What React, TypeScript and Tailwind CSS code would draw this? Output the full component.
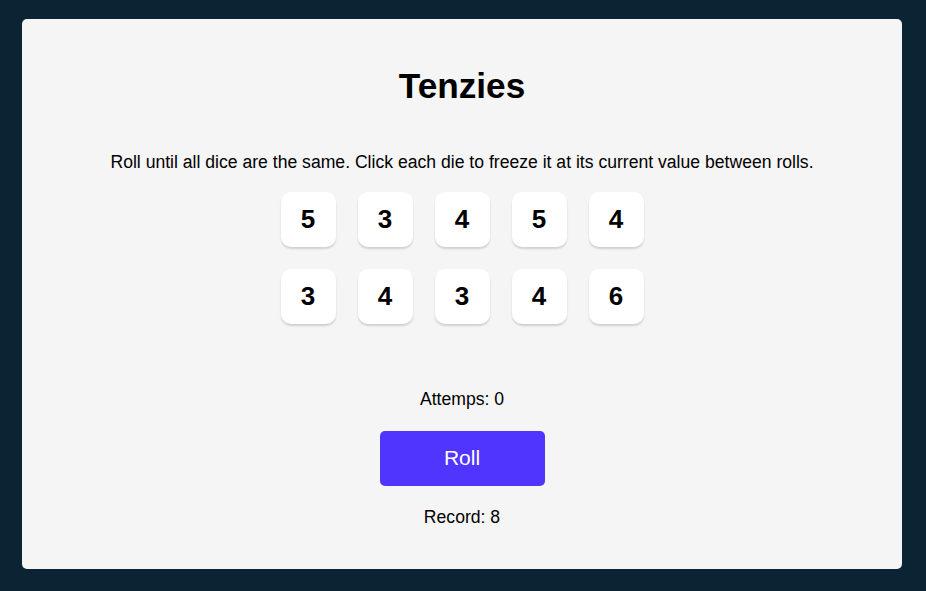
import React, { useState } from 'react';

const Die = ({ value, held, onClick }: { value: number; held: boolean; onClick: () => void }) => (
    <button
        onClick={onClick}
        className={`w-[55px] h-[55px] rounded-[10px] shadow-[0_2px_2px_rgba(0,0,0,0.15)] flex items-center justify-center text-[26px] font-bold text-black ${
            held ? 'bg-[#59E391]' : 'bg-white'
        }`}
    >
        {value}
    </button>
);

const App = () => {
    const [dice, setDice] = useState(
        [5, 3, 4, 5, 4, 3, 4, 3, 4, 6].map((value, i) => ({ id: i, value, held: false }))
    );
    const [attempts, setAttempts] = useState(0);

    const toggle = (id: number) =>
        setDice((prev) => prev.map((d) => (d.id === id ? { ...d, held: !d.held } : d)));

    const roll = () => {
        setDice((prev) =>
            prev.map((d) => (d.held ? d : { ...d, value: Math.ceil(Math.random() * 6) }))
        );
        setAttempts((a) => a + 1);
    };

    return (
        <div className="min-h-screen bg-[#0B2434] pt-[19px] pl-[22px] font-['Liberation_Sans',Arial,sans-serif]">
            <div className="w-[880px] h-[550px] bg-[#F5F5F5] rounded-[5px] flex flex-col items-center pt-[47px]">
                <h1 className="text-[35.2px] leading-[40px] font-bold text-black">Tenzies</h1>
                <p className="mt-[45px] text-[17.6px] leading-[22px] text-black">
                    Roll until all dice are the same. Click each die to freeze it at its current value between rolls.
                </p>

                {/* dice */}
                <div className="mt-[19px] grid grid-cols-5 gap-[22px]">
                    {dice.map((d) => (
                        <Die key={d.id} value={d.value} held={d.held} onClick={() => toggle(d.id)} />
                    ))}
                </div>

                <p className="mt-[64px] text-[17.6px] leading-[22px] text-black">Attemps: {attempts}</p>
                <button
                    onClick={roll}
                    className="mt-[21px] w-[165px] h-[55px] pb-[2px] bg-[#5035FF] text-white text-[21px] leading-[24px] rounded-[5px]"
                >
                    Roll
                </button>
                <p className="mt-[20px] text-[17.6px] leading-[22px] text-black">Record: 8</p>
            </div>
        </div>
    );
};

export default App;
